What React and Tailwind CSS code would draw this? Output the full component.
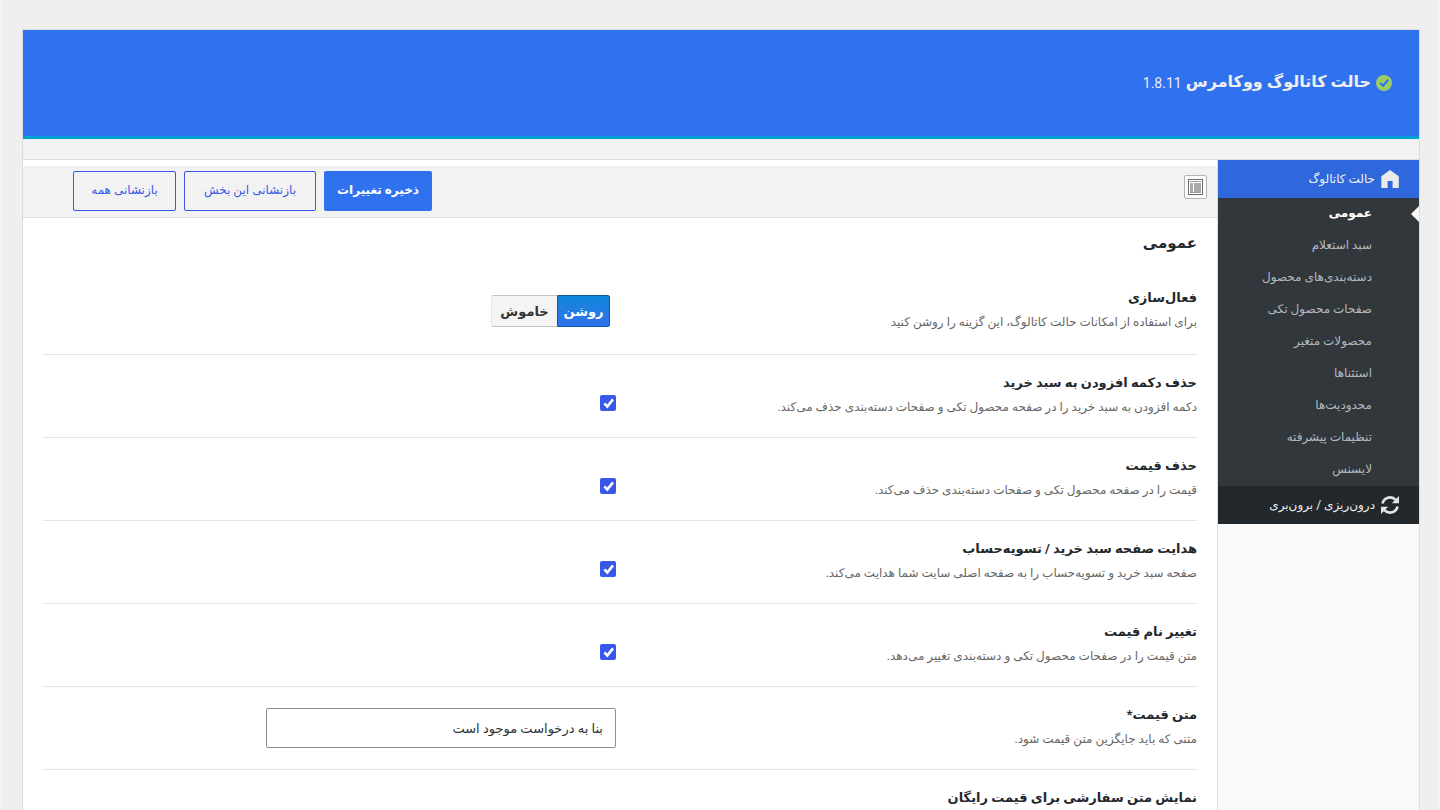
import React, { useState } from 'react';

const menuItems = [
  { id: 'general', label: 'عمومی', active: true },
  { id: 'inquiry', label: 'سبد استعلام' },
  { id: 'categories', label: 'دسته‌بندی‌های محصول' },
  { id: 'single', label: 'صفحات محصول تکی' },
  { id: 'variable', label: 'محصولات متغیر' },
  { id: 'exceptions', label: 'استثناها' },
  { id: 'limits', label: 'محدودیت‌ها' },
  { id: 'advanced', label: 'تنظیمات پیشرفته' },
  { id: 'license', label: 'لایسنس' },
];

const checkRows = [
  {
    id: 'remove_cart',
    title: 'حذف دکمه افزودن به سبد خرید',
    desc: 'دکمه افزودن به سبد خرید را در صفحه محصول تکی و صفحات دسته‌بندی حذف می‌کند.',
  },
  {
    id: 'remove_price',
    title: 'حذف قیمت',
    desc: 'قیمت را در صفحه محصول تکی و صفحات دسته‌بندی حذف می‌کند.',
  },
  {
    id: 'redirect',
    title: 'هدایت صفحه سبد خرید / تسویه‌حساب',
    desc: 'صفحه سبد خرید و تسویه‌حساب را به صفحه اصلی سایت شما هدایت می‌کند.',
  },
  {
    id: 'rename_price',
    title: 'تغییر نام قیمت',
    desc: 'متن قیمت را در صفحات محصول تکی و دسته‌بندی تغییر می‌دهد.',
  },
];

function HomeIcon() {
  return (
    <svg width="18" height="18" viewBox="0 0 18 18" fill="#eaeaea">
      <path d="M9 0 L17.8 6.2 V18 H11.6 V11 H6.6 V18 H0.3 V6.2 Z" />
    </svg>
  );
}

function SyncIcon() {
  return (
    <svg width="18" height="18" viewBox="0 0 18 18" fill="none" stroke="#e4e4e4" strokeWidth="2.6">
      <path d="M1.5 7.6 A7.6 7.6 0 0 1 14.6 3.9" />
      <path d="M16.5 10.4 A7.6 7.6 0 0 1 3.4 14.1" />
      <path d="M18 0 V7.2 H10.8 Z" fill="#e4e4e4" stroke="none" />
      <path d="M0 18 V10.8 H7.2 Z" fill="#e4e4e4" stroke="none" />
    </svg>
  );
}

function BadgeIcon() {
  return (
    <svg width="16" height="16" viewBox="0 0 16 16">
      <circle cx="8" cy="8" r="8" fill="#9ccc65" />
      <path d="M4.3 8 L7.1 10.7 L12.2 4.8" fill="none" stroke="#2f71ee" strokeWidth="2.1" />
    </svg>
  );
}

function LayoutIcon() {
  return (
    <svg width="15" height="16" viewBox="0 0 15 16">
      <rect x="0.5" y="0.5" width="14" height="15" fill="#fff" stroke="#6b6b6b" />
      <rect x="2" y="2" width="11" height="1" fill="#999" />
      <rect x="2" y="4" width="3" height="10" fill="#aaa" />
      <rect x="6" y="4" width="7" height="10" fill="#aaa" />
      <rect x="2" y="13" width="11" height="1" fill="#999" />
    </svg>
  );
}

function Checkbox({ checked, onChange }) {
  return (
    <button
      type="button"
      onClick={onChange}
      className="mt-10 h-4 w-4 rounded-[2px] bg-[#3858e9]"
    >
      {checked && (
        <svg width="16" height="16" viewBox="0 0 16 16" fill="none" stroke="#fff" strokeWidth="2.6">
          <path d="M4.4 8.4 L7.3 11.6 L13 4.4" />
        </svg>
      )}
    </button>
  );
}

function Row({ title, desc, children, first }) {
  return (
    <div className={`flex border-b border-[#e2e4e4] ${first ? 'h-[85px]' : 'h-[83px]'}`}>
      <div className="w-[581px] shrink-0 whitespace-nowrap pt-4">
        <div className="h-6 text-[13px] font-bold leading-6 text-[#23282d]">{title}</div>
        <div className="h-6 text-[12px] leading-6 text-[#666]">{desc}</div>
      </div>
      {children}
    </div>
  );
}

export default function App() {
  const [checks, setChecks] = useState({
    remove_cart: true,
    remove_price: true,
    redirect: true,
    rename_price: true,
  });
  const [enabled, setEnabled] = useState(true);
  const [priceText, setPriceText] = useState('بنا به درخواست موجود است');

  const toggle = (id) => setChecks((prev) => ({ ...prev, [id]: !prev[id] }));

  return (
    <div
      dir="rtl"
      className="h-[810px] w-[1440px] overflow-hidden bg-[#f0f2f4] px-[2px] font-['Roboto','DejaVu_Sans',sans-serif]"
    >
      <div className="h-full bg-[#efefef] pl-5 pr-[18px] pt-[29px]">
        <div className="h-[900px] border border-[#dcdcdc] bg-[#f2f2f2]">
          {/* Header */}
          <div className="flex h-[109px] items-start border-b-[3px] border-[#00a0d2] bg-[#2f71ee] pr-[27px] pt-10 text-[#eee]">
            <div className="mt-[5px]">
              <BadgeIcon />
            </div>
            <h1 className="mr-[5px] whitespace-nowrap text-[16px] font-bold leading-6">حالت کاتالوگ ووکامرس</h1>
            <span className="mr-1 text-[14px] leading-[26px]">1.8.11</span>
          </div>

          <div className="mt-5 flex h-[760px] border-t border-[#dcdcdc]">
            {/* Sidebar */}
            <aside className="w-[201px] shrink-0 whitespace-nowrap bg-[#f9f9f9]">
              <div className="flex h-[38px] items-center bg-[#2f68dc] pr-5 text-[#f0f0f0]">
                <HomeIcon />
                <span className="mr-[6px] text-[12px]">حالت کاتالوگ</span>
              </div>
              <ul className="bg-[#32373c]">
                {menuItems.map((item) => (
                  <li
                    key={item.id}
                    className={`relative h-8 pr-[47px] text-[12px] leading-[31px] ${
                      item.active ? 'font-bold text-white' : 'text-[#b4b9be]'
                    }`}
                  >
                    {item.label}
                    {item.active && (
                      <span className="absolute right-0 top-2 border-y-8 border-r-8 border-y-transparent border-r-[#f9f9f9]"></span>
                    )}
                  </li>
                ))}
              </ul>
              <div className="flex h-[38px] items-center bg-[#23282d] pr-5 text-[#eee]">
                <SyncIcon />
                <span className="mr-[6px] text-[12px]">درون‌ریزی / برون‌بری</span>
              </div>
            </aside>

            {/* Main panel */}
            <main className="min-w-0 flex-1 border-r border-[#dcdcdc] bg-white pt-[6px]">
              <div className="flex h-[52px] items-start border-b border-[#dedede] bg-[#f2f2f2] pl-[50px] pr-[10px]">
                <button
                  type="button"
                  className="mt-[9px] flex h-6 w-[23px] items-center justify-center rounded-[2px] border border-[#b5b5b5] bg-[#fafafa]"
                >
                  <LayoutIcon />
                </button>
                <div className="mr-auto mt-[5px] flex gap-2 whitespace-nowrap text-[12px]">
                  <button type="button" className="h-10 w-[108px] rounded-[2px] bg-[#2f71ee] pb-[2px] font-bold text-white">
                    ذخیره تغییرات
                  </button>
                  <button type="button" className="h-10 w-[132px] rounded-[2px] border border-[#3858e9] pb-[2px] text-[#3858e9]">
                    بازنشانی این بخش
                  </button>
                  <button type="button" className="h-10 w-[103px] rounded-[2px] border border-[#3858e9] pb-[2px] text-[#3858e9]">
                    بازنشانی همه
                  </button>
                </div>
              </div>

              <div className="px-5">
                <h2 className="h-[52px] pt-[13px] text-[15px] font-bold leading-6 text-[#23282d]">عمومی</h2>

                <Row first title="فعال‌سازی" desc="برای استفاده از امکانات حالت کاتالوگ، این گزینه را روشن کنید">
                  <div className="mr-[6px] mt-[25px] flex h-8 text-[13px] font-bold leading-[29px]">
                    <button
                      type="button"
                      onClick={() => setEnabled(true)}
                      className="w-[53px] rounded-r-[2px] border border-[#0a5a9c] bg-linear-to-b from-[#0b86d8] to-[#2f71ee] text-white"
                    >
                      روشن
                    </button>
                    <button
                      type="button"
                      onClick={() => setEnabled(false)}
                      aria-pressed={!enabled}
                      className="w-[66px] rounded-l-[2px] border-y border-l border-y-[#c4c4c4] border-l-[#e4e4e4] bg-[#f4f4f4] text-[#333]"
                    >
                      خاموش
                    </button>
                  </div>
                </Row>

                {checkRows.map((row) => (
                  <Row key={row.id} title={row.title} desc={row.desc}>
                    <Checkbox checked={checks[row.id]} onChange={() => toggle(row.id)} />
                  </Row>
                ))}

                <Row title="متن قیمت*" desc="متنی که باید جایگزین متن قیمت شود.">
                  <input
                    type="text"
                    value={priceText}
                    onChange={(e) => setPriceText(e.target.value)}
                    className="mt-[21px] h-10 w-[350px] rounded-[2px] border border-[#8c8f94] px-3 text-[13px] text-[#2c3338]"
                  />
                </Row>

                <Row title="نمایش متن سفارشی برای قیمت رایگان" desc="" />
              </div>
            </main>
          </div>
        </div>
      </div>
    </div>
  );
}
